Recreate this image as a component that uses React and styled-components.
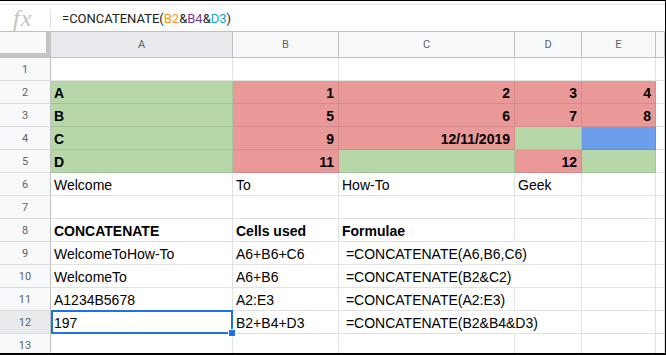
import React from 'react';
import styled, { createGlobalStyle } from 'styled-components';

const GlobalStyle = createGlobalStyle`
  html, body {
    margin: 0;
    padding: 0;
    background: #fff;
  }
  body {
    font-family: "Liberation Sans", Arial, sans-serif;
  }
`;

const Frame = styled.div`
  width: 666px;
  height: 355px;
  box-sizing: border-box;
  border-top: 1px solid #000;
  border-right: 1px solid #000;
  border-bottom: 2px solid #000;
  overflow: hidden;
  display: flex;
  flex-direction: column;
  background: #fff;
`;

const TopStrip = styled.div`
  flex: none;
  height: 3px;
`;

const FormulaBar = styled.div`
  flex: none;
  height: 28px;
  box-sizing: border-box;
  border-top: 1px solid #e3e3e3;
  border-bottom: 1px solid #c0c0c0;
  display: flex;
  align-items: center;
`;

const FxBox = styled.div`
  width: 50px;
  box-sizing: border-box;
  padding-left: 13px;
  font-family: "Liberation Serif", "Times New Roman", serif;
  font-style: italic;
  font-size: 24px;
  line-height: 24px;
  color: #c4c4c4;
  letter-spacing: 1px;
`;

const Divider = styled.div`
  width: 1px;
  height: 17px;
  background: #dedede;
`;

const FormulaText = styled.div`
  padding-left: 11px;
  font-family: Roboto, "Liberation Sans", sans-serif;
  font-size: 13px;
  color: #222;
  white-space: pre;
`;

const Ref = styled.span`
  color: ${p => p.$color};
`;

const Sheet = styled.div`
  flex: none;
  display: grid;
  grid-template-columns: 51px 182px 106px 176px 67px 74px 1fr;
  grid-template-rows: 26px;
  grid-auto-rows: 23px;
`;

const Corner = styled.div`
  box-sizing: border-box;
  background: #f8f9fa;
  border-right: 5px solid #c4c4c4;
  border-bottom: 5px solid #c4c4c4;
`;

const ColHead = styled.div`
  box-sizing: border-box;
  background: ${p => (p.$active ? '#e8eaed' : '#f8f9fa')};
  border-right: 1px solid #c0c0c0;
  border-bottom: 1px solid #c0c0c0;
  display: flex;
  align-items: center;
  justify-content: center;
  font-family: Roboto, "Liberation Sans", sans-serif;
  font-size: 11px;
  color: #5f6368;
`;

const RowHead = styled.div`
  box-sizing: border-box;
  background: ${p => (p.$active ? '#e8eaed' : '#f8f9fa')};
  border-right: 1px solid #c0c0c0;
  border-bottom: 1px solid #dadce0;
  display: flex;
  align-items: center;
  justify-content: center;
  font-family: Roboto, "Liberation Sans", sans-serif;
  font-size: 11px;
  color: #5f6368;
`;

const Cell = styled.div`
  box-sizing: border-box;
  min-width: 0;
  padding: 4px 4px 0 3px;
  text-align: ${p => (p.$right ? 'right' : 'left')};
  background: ${p => p.$bg || '#fff'};
  border-right: 1px solid ${p => (p.$spill ? 'transparent' : p.$bg ? 'rgba(0,0,0,0.09)' : '#e2e2e2')};
  border-bottom: 1px solid ${p => (p.$bg ? 'rgba(0,0,0,0.09)' : '#e2e2e2')};
  font-size: 14px;
  line-height: 17px;
  font-weight: ${p => (p.$bold ? 700 : 400)};
  color: #000;
  white-space: pre;
  position: ${p => (p.$selected ? 'relative' : 'static')};
  z-index: ${p => (p.$spill ? 1 : 'auto')};

  ${p =>
    p.$selected &&
    `
    &::after {
      content: '';
      position: absolute;
      top: -1px;
      left: 0;
      right: -1px;
      bottom: -1px;
      border: 2px solid #1a73e8;
    }
    &::before {
      content: '';
      position: absolute;
      right: -4px;
      bottom: -4px;
      width: 6px;
      height: 6px;
      background: #1a73e8;
      border: 1px solid #fff;
      z-index: 2;
    }
  `}
`;

const GREEN = '#b6d7a8';
const RED = '#ea9999';
const BLUE = '#6d9eeb';

const columns = ['A', 'B', 'C', 'D', 'E', ''];

const rows = [
  [],
  [
    { t: 'A', bold: true, bg: GREEN },
    { t: '1', bold: true, right: true, bg: RED },
    { t: '2', bold: true, right: true, bg: RED },
    { t: '3', bold: true, right: true, bg: RED },
    { t: '4', bold: true, right: true, bg: RED },
  ],
  [
    { t: 'B', bold: true, bg: GREEN },
    { t: '5', bold: true, right: true, bg: RED },
    { t: '6', bold: true, right: true, bg: RED },
    { t: '7', bold: true, right: true, bg: RED },
    { t: '8', bold: true, right: true, bg: RED },
  ],
  [
    { t: 'C', bold: true, bg: GREEN },
    { t: '9', bold: true, right: true, bg: RED },
    { t: '12/11/2019', bold: true, right: true, bg: RED },
    { bg: GREEN },
    { bg: BLUE },
  ],
  [
    { t: 'D', bold: true, bg: GREEN },
    { t: '11', bold: true, right: true, bg: RED },
    { bg: GREEN },
    { t: '12', bold: true, right: true, bg: RED },
    { bg: GREEN },
  ],
  [{ t: 'Welcome' }, { t: 'To' }, { t: 'How-To' }, { t: 'Geek' }],
  [],
  [
    { t: 'CONCATENATE', bold: true },
    { t: 'Cells used', bold: true },
    { t: 'Formulae', bold: true },
  ],
  [{ t: 'WelcomeToHow-To' }, { t: 'A6+B6+C6' }, { t: ' =CONCATENATE(A6,B6,C6)', spill: true }],
  [{ t: 'WelcomeTo' }, { t: 'A6+B6' }, { t: ' =CONCATENATE(B2&C2)', spill: true }],
  [{ t: 'A1234B5678' }, { t: 'A2:E3' }, { t: ' =CONCATENATE(A2:E3)' }],
  [{ t: '197', selected: true }, { t: 'B2+B4+D3' }, { t: ' =CONCATENATE(B2&B4&D3)', spill: true }],
  [],
];

export default function App() {
  return (
    <>
      <GlobalStyle />
      <Frame>
        <TopStrip />
        <FormulaBar>
          <FxBox>fx</FxBox>
          <Divider />
          <FormulaText>
            =CONCATENATE(<Ref $color="#f7981d">B2</Ref>&amp;<Ref $color="#7e3794">B4</Ref>&amp;
            <Ref $color="#11a9cc">D3</Ref>)
          </FormulaText>
        </FormulaBar>
        <Sheet>
          <Corner />
          {columns.map((c, i) => (
            <ColHead key={i} $active={c === 'A'}>
              {c}
            </ColHead>
          ))}
          {rows.map((row, r) => (
            <React.Fragment key={r}>
              <RowHead $active={r === 11}>{r + 1}</RowHead>
              {columns.map((_, c) => {
                const cell = row[c] || {};
                return (
                  <Cell
                    key={c}
                    $bg={cell.bg}
                    $bold={cell.bold}
                    $right={cell.right}
                    $spill={cell.spill}
                    $selected={cell.selected}
                  >
                    {cell.t || null}
                  </Cell>
                );
              })}
            </React.Fragment>
          ))}
        </Sheet>
      </Frame>
    </>
  );
}
